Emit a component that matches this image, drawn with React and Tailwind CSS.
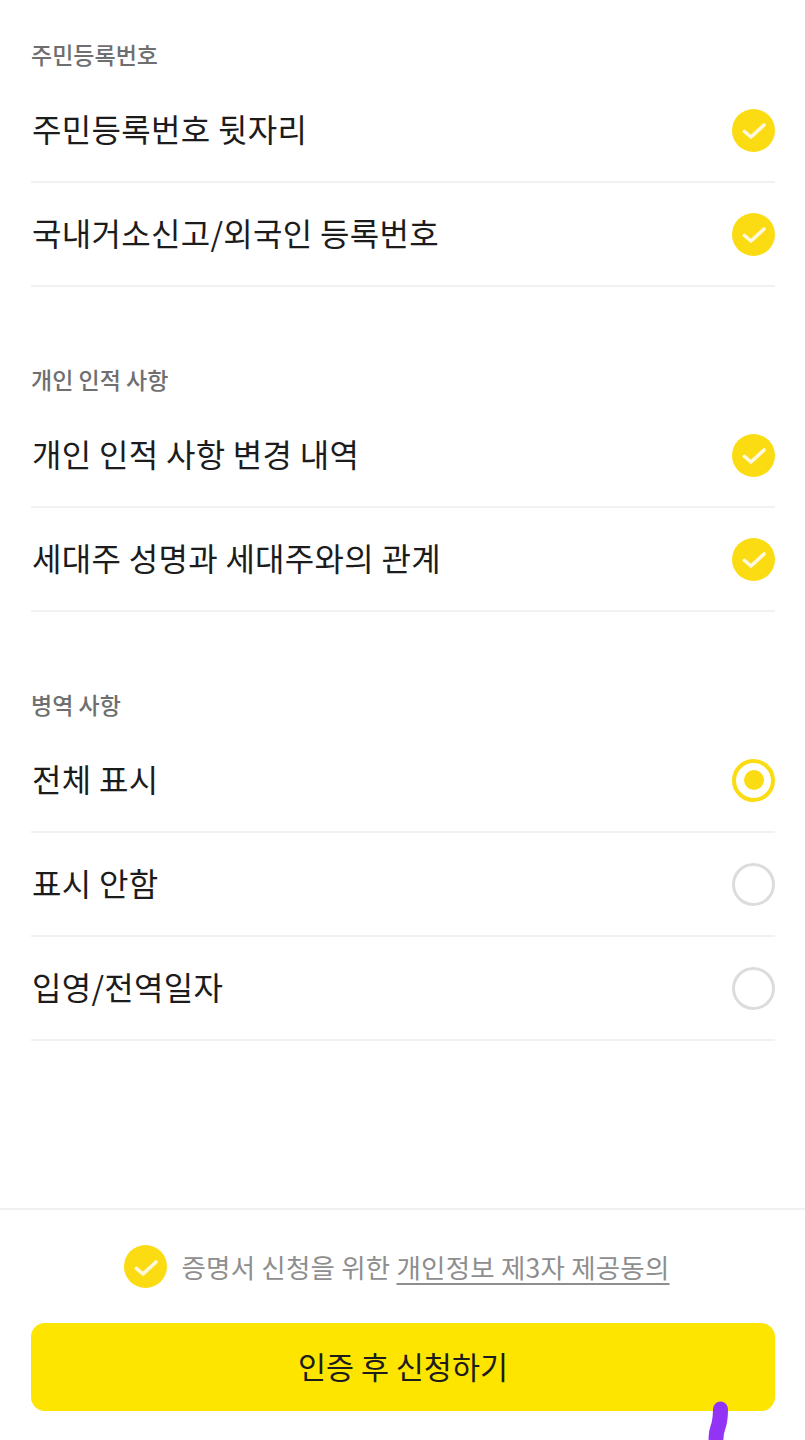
import React from "react";

const sections = [
  {
    title: "주민등록번호",
    type: "check",
    items: ["주민등록번호 뒷자리", "국내거소신고/외국인 등록번호"],
  },
  {
    title: "개인 인적 사항",
    type: "check",
    items: ["개인 인적 사항 변경 내역", "세대주 성명과 세대주와의 관계"],
  },
  {
    title: "병역 사항",
    type: "radio",
    items: ["전체 표시", "표시 안함", "입영/전역일자"],
  },
];

function CheckIcon() {
  return (
    <div className="w-[43px] h-[43px] rounded-full bg-[#fbdc12] flex items-center justify-center shrink-0">
      <svg width="28" height="28" viewBox="0 0 28 28" fill="none">
        <path d="M4.5 15.5 L11 21 L24 9" stroke="#fff8e0" strokeWidth="3.6" strokeLinecap="round" strokeLinejoin="round" />
      </svg>
    </div>
  );
}

function Radio({ selected }) {
  if (selected) {
    return (
      <div className="w-[43px] h-[43px] rounded-full border-[4px] border-[#fbdc12] flex items-center justify-center shrink-0">
        <div className="w-[20px] h-[20px] rounded-full bg-[#fbdc12]"></div>
      </div>
    );
  }
  return <div className="w-[43px] h-[43px] rounded-full border-[3px] border-[#dcdcdc] shrink-0"></div>;
}

export default function App() {
  return (
    <div
      className="w-[805px] h-[1440px] bg-white flex flex-col relative overflow-hidden text-[#1c1c1c]"
      style={{ fontFamily: '"Noto Sans CJK KR", "Noto Sans", sans-serif' }}
    >
      <div className="flex-1 pl-[31px] pt-[38px] pr-[30px]">
        {sections.map((section, i) => (
          <div key={section.title} className={i > 0 ? "mt-[76px]" : ""}>
            <div className="h-[41px] text-[23px] leading-[33px] font-medium text-[#6f6f6f]">{section.title}</div>
            {section.items.map((item, idx) => (
              <div key={item} className="h-[104px] flex items-center justify-between border-b-2 border-[#f1f1f1]">
                <span className="text-[32px] leading-[44px] tracking-[0.3px] ml-[1px] pb-[5px]">{item}</span>
                {section.type === "check" ? <CheckIcon /> : <Radio selected={idx === 0} />}
              </div>
            ))}
          </div>
        ))}
      </div>

      <div className="h-[232px] border-t-2 border-[#f0f0f0] pl-[31px] pr-[30px]">
        <div className="flex items-center justify-center gap-[14px] h-[113px] pr-[12px]">
          <CheckIcon />
          <span className="text-[26.5px] text-[#8e8e8e] tracking-[0.2px]">
            증명서 신청을 위한 <span className="underline underline-offset-[5px]">개인정보 제3자 제공동의</span>
          </span>
        </div>
        <button className="w-full h-[88px] rounded-[14px] bg-[#fee500] text-[30.5px] text-[#1c1c1c] flex items-center justify-center">
          인증 후 신청하기
        </button>
      </div>

      <svg className="absolute left-[700px] top-[1400px]" width="34" height="40" viewBox="0 0 34 40" fill="none">
        <path d="M20.5 9 C20.5 15 20 20 19 24 C18 28 16 31 16 38" stroke="#9333f5" strokeWidth="15" strokeLinecap="round" />
      </svg>
    </div>
  );
}
